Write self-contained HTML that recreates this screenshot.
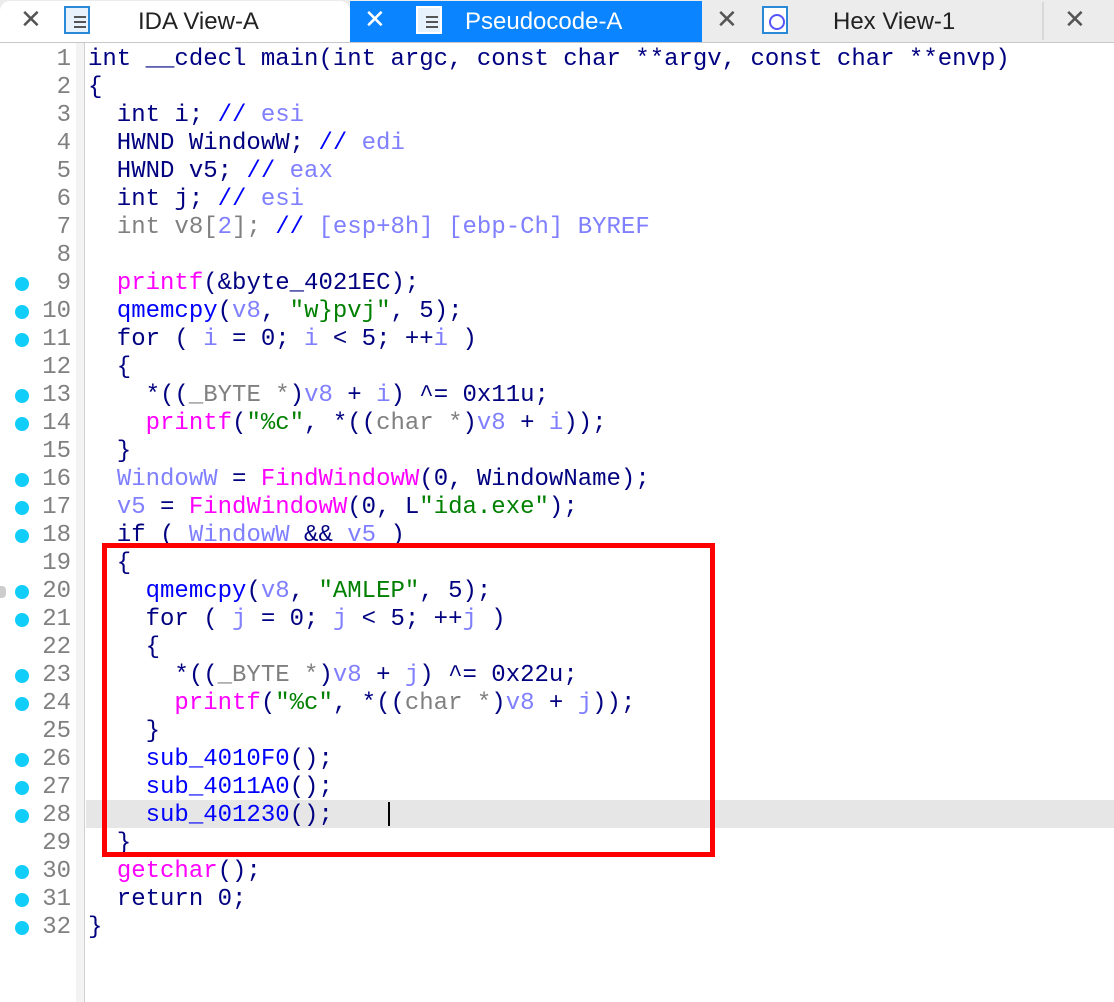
<!DOCTYPE html>
<html><head><meta charset="utf-8"><style>
body{margin:0;width:1114px;height:1002px;background:#fff;position:relative;overflow:hidden;font-family:"Liberation Sans",sans-serif}
.tabs{position:absolute;left:0;top:0;width:1114px;height:42px;background:#ececec;border-bottom:1px solid #c8c8c8}
.tab{position:absolute;top:1px;height:41px;font-size:24px;line-height:41px;color:#222}
.x{position:absolute;top:0;font-size:26px;color:#555}
.ic{position:absolute;top:6px;width:26px;height:28px;border:2px solid #2a8ad8;background:#e8f2fc;box-sizing:border-box}
.ic i{position:absolute;left:8px;width:12px;height:2px;background:#555}
pre{margin:0;position:absolute;left:88px;top:46px;font-family:"Liberation Mono",monospace;font-size:24px;line-height:28px;color:#000080}
.nums{position:absolute;left:0;top:46px;width:71px;text-align:right;font-family:"Liberation Mono",monospace;font-size:24px;line-height:28px;color:#808080;margin:0}
.d{position:absolute;left:15px;width:14px;height:14px;border-radius:50%;background:#10cdfa;margin-top:1px}
.b{color:#0000ff}.v{color:#7f7fff}.m{color:#ff00ff}.g{color:#008000}.gr{color:#808080}
</style></head><body>
<div class="tabs">
 <div class="tab" style="left:0;width:350px;background:#fff;border-radius:10px 10px 0 0"></div>
 <div class="x" style="left:20px;top:4px">✕</div>
 <div class="ic" style="left:64px"><i style="top:8px"></i><i style="top:13px"></i><i style="top:18px"></i></div>
 <div class="tab" style="left:138px">IDA View-A</div>
 <div class="tab" style="left:350px;width:352px;background:#0a84ff"></div>
 <div class="x" style="left:364px;top:4px;color:#fff">✕</div>
 <div class="ic" style="left:416px;border-color:#fff"><i style="top:8px"></i><i style="top:13px"></i><i style="top:18px"></i></div>
 <div class="tab" style="left:465px;color:#fff">Pseudocode-A</div>
 <div class="x" style="left:716px;top:4px">✕</div>
 <div class="ic" style="left:762px;background:#fff"><div style="position:absolute;left:5px;top:6px;width:12px;height:12px;border:2px solid #55f;border-radius:50%"></div></div>
 <div class="tab" style="left:833px">Hex View-1</div>
 <div style="position:absolute;left:1042px;top:2px;width:2px;height:38px;background:#d8d8d8"></div>
 <div class="x" style="left:1064px;top:4px">✕</div>
</div>
<div style="position:absolute;left:76px;top:43px;width:8px;height:959px;background:#f3f3f3;border-right:1px solid #d0d0d0"></div>
<div style="position:absolute;left:86px;top:800px;width:1028px;height:28px;background:#e6e6e6"></div>
<pre class="nums">1
2
3
4
5
6
7
8
9
10
11
12
13
14
15
16
17
18
19
20
21
22
23
24
25
26
27
28
29
30
31
32</pre>
<div class="d" style="top:276px"></div><div class="d" style="top:304px"></div><div class="d" style="top:332px"></div>
<div class="d" style="top:388px"></div><div class="d" style="top:416px"></div>
<div class="d" style="top:472px"></div><div class="d" style="top:500px"></div><div class="d" style="top:528px"></div>
<div class="d" style="top:584px"></div><div class="d" style="top:612px"></div>
<div class="d" style="top:668px"></div><div class="d" style="top:696px"></div>
<div class="d" style="top:752px"></div><div class="d" style="top:780px"></div><div class="d" style="top:808px"></div>
<div class="d" style="top:864px"></div><div class="d" style="top:892px"></div><div class="d" style="top:920px"></div>
<pre>int __cdecl main(int argc, const char **argv, const char **envp)
{
  int i; <span class="b">//</span> <span class="v">esi</span>
  HWND WindowW; <span class="b">//</span> <span class="v">edi</span>
  HWND v5; <span class="b">//</span> <span class="v">eax</span>
  int j; <span class="b">//</span> <span class="v">esi</span>
  <span class="gr">int v8[</span><span class="v">2</span><span class="gr">];</span> <span class="b">//</span> <span class="v">[esp+8h] [ebp-Ch] BYREF</span>

  <span class="m">printf</span>(&amp;byte_4021EC);
  <span class="b">qmemcpy</span>(<span class="v">v8</span>, <span class="g">"w}pvj"</span>, 5);
  for ( <span class="v">i</span> = 0; <span class="v">i</span> &lt; 5; ++<span class="v">i</span> )
  {
    *((<span class="gr">_BYTE *</span>)<span class="v">v8</span> + <span class="v">i</span>) ^= 0x11u;
    <span class="m">printf</span>(<span class="g">"%c"</span>, *((<span class="gr">char *</span>)<span class="v">v8</span> + <span class="v">i</span>));
  }
  <span class="v">WindowW</span> = <span class="m">FindWindowW</span>(0, WindowName);
  <span class="v">v5</span> = <span class="m">FindWindowW</span>(0, L<span class="g">"ida.exe"</span>);
  if ( <span class="v">WindowW</span> &amp;&amp; <span class="v">v5</span> )
  {
    <span class="b">qmemcpy</span>(<span class="v">v8</span>, <span class="g">"AMLEP"</span>, 5);
    for ( <span class="v">j</span> = 0; <span class="v">j</span> &lt; 5; ++<span class="v">j</span> )
    {
      *((<span class="gr">_BYTE *</span>)<span class="v">v8</span> + <span class="v">j</span>) ^= 0x22u;
      <span class="m">printf</span>(<span class="g">"%c"</span>, *((<span class="gr">char *</span>)<span class="v">v8</span> + <span class="v">j</span>));
    }
    <span class="b">sub_4010F0</span>();
    <span class="b">sub_4011A0</span>();
    <span class="b">sub_401230</span>();
  }
  <span class="m">getchar</span>();
  return 0;
}</pre>
<div style="position:absolute;left:388px;top:802px;width:2px;height:24px;background:#000"></div>
<div style="position:absolute;left:102px;top:543px;width:613px;height:314px;border:5px solid #f00;box-sizing:border-box"></div>
<div style="position:absolute;left:0;top:586px;width:6px;height:12px;background:#ccc;border-radius:0 4px 4px 0"></div>
</body></html>
